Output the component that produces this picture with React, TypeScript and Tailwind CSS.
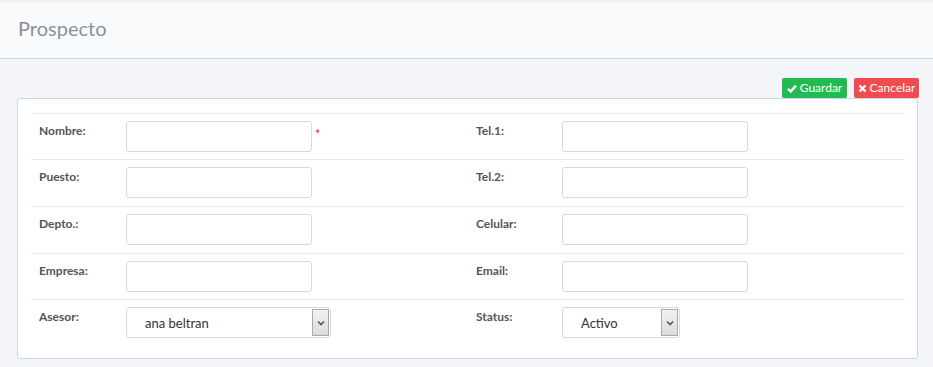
import React from 'react';

interface Field {
  label: string;
  kind: 'input' | 'select';
  value?: string;
  required?: boolean;
  width?: string;
}

const rows: [Field, Field][] = [
  [
    { label: 'Nombre:', kind: 'input', required: true },
    { label: 'Tel.1:', kind: 'input' },
  ],
  [
    { label: 'Puesto:', kind: 'input' },
    { label: 'Tel.2:', kind: 'input' },
  ],
  [
    { label: 'Depto.:', kind: 'input' },
    { label: 'Celular:', kind: 'input' },
  ],
  [
    { label: 'Empresa:', kind: 'input' },
    { label: 'Email:', kind: 'input' },
  ],
  [
    { label: 'Asesor:', kind: 'select', value: 'ana beltran', width: 'w-[205px]' },
    { label: 'Status:', kind: 'select', value: 'Activo', width: 'w-[118px]' },
  ],
];

// row heights as they come out of the original table (border excluded)
const rowHeights = ['h-[45px]', 'h-[46px]', 'h-[46px]', 'h-[45px]', 'h-[45px]'];

function FakeSelect({ value, width }: { value: string; width: string }) {
  return (
    <div
      className={`${width} h-[31px] flex items-stretch rounded-[3px] border border-[#d3dcdc] bg-white`}
    >
      <span className="flex-1 pl-[18px] pt-[2px] flex items-center text-[13px] text-[#333]">{value}</span>
      <span className="w-[17px] my-[1px] mr-[1px] flex items-center justify-center border border-[#a9a9a9] bg-gradient-to-b from-[#f2f2f2] to-[#dcdcdc]">
        <svg width="8" height="6" viewBox="0 0 8 6">
          <path d="M1 1.5 L4 4.5 L7 1.5" fill="none" stroke="#555" strokeWidth="1.6" />
        </svg>
      </span>
    </div>
  );
}

function Cell({ field, height }: { field: Field; height: string }) {
  return (
    <>
      <div className={`${height} pl-2 pt-[8px] text-[12px] font-bold text-[#555]`}>{field.label}</div>
      <div className="pt-[7px] pl-2 flex items-start">
        {field.kind === 'input' ? (
          <div className="w-[186px] h-[31px] rounded-[3px] border border-[#d3dcdc] bg-white" />
        ) : (
          <FakeSelect value={field.value ?? ''} width={field.width ?? 'w-[186px]'} />
        )}
        {field.required && <span className="ml-[3px] mt-[4px] text-[13px] text-[#e4262b]">*</span>}
      </div>
    </>
  );
}

export default function App() {
  return (
    <div className="min-h-[367px] bg-[#f3f5f8]" style={{ fontFamily: 'Lato, "Open Sans", sans-serif' }}>
      <div className="h-[59px] bg-[#f8fafc] border-t-2 border-t-[#f0f2f5] border-b border-b-[#c9d7e2] flex items-center pl-[18px]">
        <h1 className="text-[20px] text-[#8c9197] pb-[4px]">Prospecto</h1>
      </div>

      <div className="px-[15px]">
        <div className="flex justify-end gap-[7px] mt-[19px] -mr-[1px]">
          <button className="h-[20px] w-[65px] rounded-[2px] bg-[#23bb4f] text-white text-[12px] flex items-center justify-center gap-[3px]">
            <svg width="10" height="9" viewBox="0 0 10 9">
              <path d="M1 4.8 L3.8 7.4 L9 1.6" fill="none" stroke="white" strokeWidth="2.4" />
            </svg>
            Guardar
          </button>
          <button className="h-[20px] w-[65px] rounded-[2px] bg-[#ef4c50] text-white text-[12px] flex items-center justify-center gap-[3px]">
            <svg width="9" height="9" viewBox="0 0 9 9">
              <path d="M1.5 1.5 L7.5 7.5 M7.5 1.5 L1.5 7.5" fill="none" stroke="white" strokeWidth="2.4" />
            </svg>
            Cancelar
          </button>
        </div>

        <div className="ml-[2px] bg-white border border-[#c9d7e2] rounded-[3px] pt-[14px] pb-[13px] pl-[13px] pr-[12px]">
          <div className="grid grid-cols-[87px_350px_86px_1fr]">
            {rows.map((pair, i) => (
              <div key={i} className="contents">
                <div className="col-span-4 border-t border-[#e6e9ec]" />
                <Cell field={pair[0]} height={rowHeights[i]} />
                <Cell field={pair[1]} height={rowHeights[i]} />
              </div>
            ))}
          </div>
        </div>
      </div>
    </div>
  );
}
